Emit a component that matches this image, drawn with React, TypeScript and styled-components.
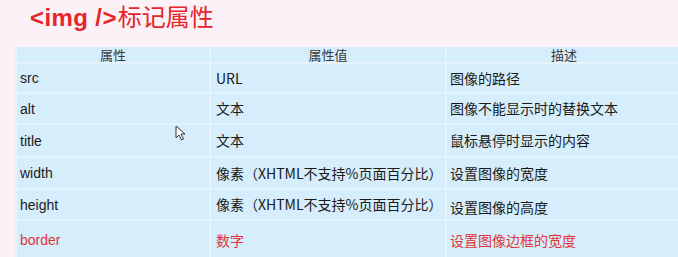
import React from "react";
import styled, { createGlobalStyle } from "styled-components";

const Global = createGlobalStyle`
  html, body { margin: 0; padding: 0; }
  body {
    background: #fbf1f6;
    width: 678px;
    height: 257px;
    overflow: hidden;
    font-family: "Liberation Sans", Arial, "Noto Sans CJK SC", sans-serif;
  }
`;

const Page = styled.div`
  position: relative;
  display: flex;
  flex-direction: column;
  align-items: flex-start;
  padding: 0 0 0 15px;
`;

const Title = styled.h1`
  display: flex;
  align-items: baseline;
  margin: 0 0 13px 15px;
  padding: 0;
  height: 34px;
  font-size: 24px;
  line-height: 32px;
  font-weight: normal;
  color: #e5262a;
  white-space: nowrap;
`;

const Tag = styled.span`
  font-family: "Liberation Sans", Arial, sans-serif;
  font-weight: bold;
  letter-spacing: 0.4px;
  margin-right: 1px;
`;

const TitleCjk = styled.span`
  font-family: "Noto Sans CJK SC", sans-serif;
  font-weight: normal;
  line-height: 32px;
`;

const Table = styled.table`
  width: 660px;
  border-collapse: collapse;
  table-layout: fixed;
  background: #d6edfb;
`;

const Th = styled.th<{ $w: number }>`
  width: ${(p) => p.$w}px;
  height: 15px;
  padding: 0;
  font-weight: normal;
  font-size: 13px;
  line-height: 15px;
  color: #3a3a3a;
  font-family: "Noto Sans CJK SC", sans-serif;
  text-align: center;
  border: 2px solid #e4f3fc;
  border-top: none;
`;

const Tr = styled.tr<{ $h: number }>`
  height: ${(p) => p.$h}px;
`;

const Td = styled.td<{ $red?: boolean; $pl: number; $drop?: number }>`
  padding: ${(p) => (p.$drop ? `${p.$drop}px` : "0")} 0 0 ${(p) => p.$pl}px;
  font-size: 14px;
  line-height: 16px;
  color: ${(p) => (p.$red ? "#e0343a" : "#1a1a1a")};
  font-family: "Liberation Sans", Arial, "Noto Sans CJK SC", sans-serif;
  border: 2px solid #e4f3fc;
  vertical-align: middle;
  white-space: nowrap;
`;

const Cjk = styled.span`
  font-family: "Noto Sans CJK SC", sans-serif;
  color: inherit;
`;

const Cursor = styled.svg`
  position: absolute;
  left: 175px;
  top: 125px;
`;

type Row = { a: string; v: string; d: string; h: number; red?: boolean; dDrop?: number };

const rows: Row[] = [
  { a: "src", v: "URL", d: "图像的路径", h: 30 },
  { a: "alt", v: "文本", d: "图像不能显示时的替换文本", h: 31 },
  { a: "title", v: "文本", d: "鼠标悬停时显示的内容", h: 33 },
  { a: "width", v: "像素（XHTML不支持%页面百分比）", d: "设置图像的宽度", h: 32 },
  { a: "height", v: "像素（XHTML不支持%页面百分比）", d: "设置图像的高度", h: 31, dDrop: 6 },
  { a: "border", v: "数字", d: "设置图像边框的宽度", h: 40, red: true },
];

export default function App() {
  return (
    <>
      <Global />
      <Page>
        <Title>
          <Tag>&lt;img /&gt;</Tag>
          <TitleCjk>标记属性</TitleCjk>
        </Title>
        <Table>
          <thead>
            <tr>
              <Th $w={192}>属性</Th>
              <Th $w={234}>属性值</Th>
              <Th $w={234}>描述</Th>
            </tr>
          </thead>
          <tbody>
            {rows.map((r) => (
              <Tr key={r.a} $h={r.h}>
                <Td $pl={3} $red={r.red}>{r.a}</Td>
                <Td $pl={5} $red={r.red}>
                  <Cjk>{r.v}</Cjk>
                </Td>
                <Td $pl={3} $red={r.red} $drop={r.dDrop}>
                  <Cjk>{r.d}</Cjk>
                </Td>
              </Tr>
            ))}
          </tbody>
        </Table>
        <Cursor width="11" height="16" viewBox="0 0 11 16">
          <path
            d="M1 1 L1 13 L4 10 L6.5 15 L8.5 14 L6 9 L10 9 Z"
            fill="#fff"
            stroke="#333"
            strokeWidth="1"
            strokeLinejoin="round"
          />
        </Cursor>
      </Page>
    </>
  );
}
